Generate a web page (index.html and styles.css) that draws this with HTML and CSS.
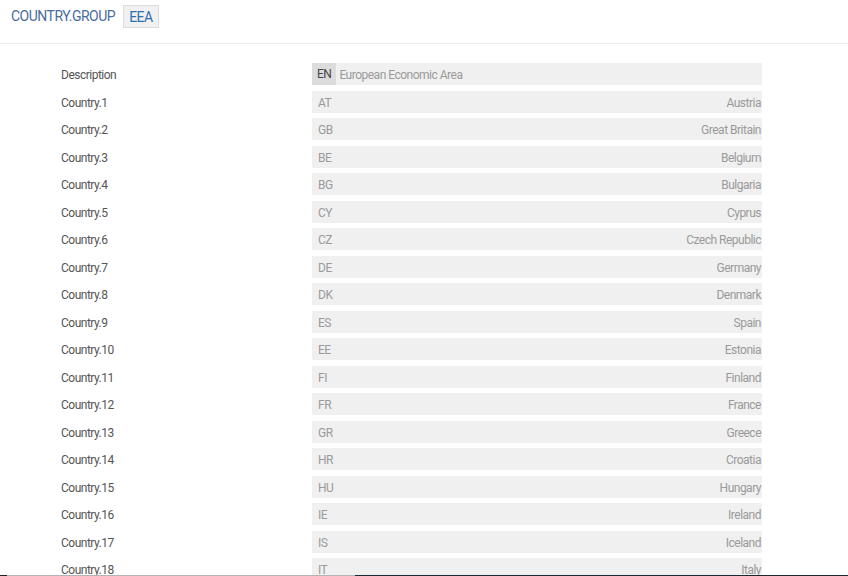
FILE: index.html
```html
<!DOCTYPE html>
<html lang="en">
<head>
  <meta charset="UTF-8">
  <title>COUNTRY.GROUP - EEA</title>
  <link rel="stylesheet" href="styles.css">
</head>
<body>

  <div class="header">
    <span class="entity">COUNTRY.GROUP</span>
    <span class="key">EEA</span>
  </div>

  <div class="form">
    <div class="label">Description</div>
    <div class="field"><span class="lang">EN</span><span class="desc">European Economic Area</span></div>

    <div class="label">Country.1</div>
    <div class="field"><span>AT</span><span>Austria</span></div>
    <div class="label">Country.2</div>
    <div class="field"><span>GB</span><span>Great Britain</span></div>
    <div class="label">Country.3</div>
    <div class="field"><span>BE</span><span>Belgium</span></div>
    <div class="label">Country.4</div>
    <div class="field"><span>BG</span><span>Bulgaria</span></div>
    <div class="label">Country.5</div>
    <div class="field"><span>CY</span><span>Cyprus</span></div>
    <div class="label">Country.6</div>
    <div class="field"><span>CZ</span><span>Czech Republic</span></div>
    <div class="label">Country.7</div>
    <div class="field"><span>DE</span><span>Germany</span></div>
    <div class="label">Country.8</div>
    <div class="field"><span>DK</span><span>Denmark</span></div>
    <div class="label">Country.9</div>
    <div class="field"><span>ES</span><span>Spain</span></div>
    <div class="label">Country.10</div>
    <div class="field"><span>EE</span><span>Estonia</span></div>
    <div class="label">Country.11</div>
    <div class="field"><span>FI</span><span>Finland</span></div>
    <div class="label">Country.12</div>
    <div class="field"><span>FR</span><span>France</span></div>
    <div class="label">Country.13</div>
    <div class="field"><span>GR</span><span>Greece</span></div>
    <div class="label">Country.14</div>
    <div class="field"><span>HR</span><span>Croatia</span></div>
    <div class="label">Country.15</div>
    <div class="field"><span>HU</span><span>Hungary</span></div>
    <div class="label">Country.16</div>
    <div class="field"><span>IE</span><span>Ireland</span></div>
    <div class="label">Country.17</div>
    <div class="field"><span>IS</span><span>Iceland</span></div>
    <div class="label">Country.18</div>
    <div class="field"><span>IT</span><span>Italy</span></div>
  </div>

  <div class="bottom-bar">
    <div class="seg-dark-a"></div>
    <div class="seg-light"></div>
    <div class="seg-dark-b"></div>
  </div>

</body>
</html>
```

FILE: styles.css
```css
html {
  overflow: hidden;
}

body {
  font-family: Roboto, 'Liberation Sans', sans-serif;
  background: #fff;
  margin: 0;
  color: #555;
  letter-spacing: -0.5px;
}

.header {
  display: flex;
  align-items: center;
  height: 44px;
  padding: 0 0 11px 11px;
  box-sizing: border-box;
  border-bottom: 1px solid #ececec;
}

.entity {
  font-size: 14px;
  color: #4a6c9c;
}

.key {
  margin-left: 8px;
  height: 23px;
  line-height: 22px;
  padding: 0 5px;
  box-sizing: border-box;
  border: 1px solid #dcdcdc;
  background: #f1f1f1;
  color: #2f6eae;
  font-size: 14px;
}

.form {
  display: grid;
  grid-template-columns: 251px 450px;
  grid-auto-rows: 22px;
  row-gap: 5.5px;
  padding: 19px 0 0 61px;
}

.label {
  font-size: 12px;
  color: #555;
  height: 22px;
  line-height: 24px;
}

.field {
  display: flex;
  justify-content: space-between;
  align-items: center;
  height: 22px;
  background: #f0f0f0;
  font-size: 12px;
  color: #9a9a9a;
  padding: 2px 1px 0 6px;
  box-sizing: border-box;
}

.field .lang {
  background: #dcdcdc;
  color: #444;
  height: 22px;
  line-height: 22px;
  padding: 0 5px;
  margin: -2px 0 0 -6px;
}

.field .desc {
  flex: 1;
  margin-left: 3px;
}

.bottom-bar {
  position: fixed;
  left: 0;
  right: 0;
  bottom: 0;
  height: 1px;
  display: flex;
}

.seg-dark-a {
  width: 7px;
  background: #1e2328;
}

.seg-light {
  width: 348px;
  background: #b4b4b4;
}

.seg-dark-b {
  flex: 1;
  background: #1e2830;
}
```
